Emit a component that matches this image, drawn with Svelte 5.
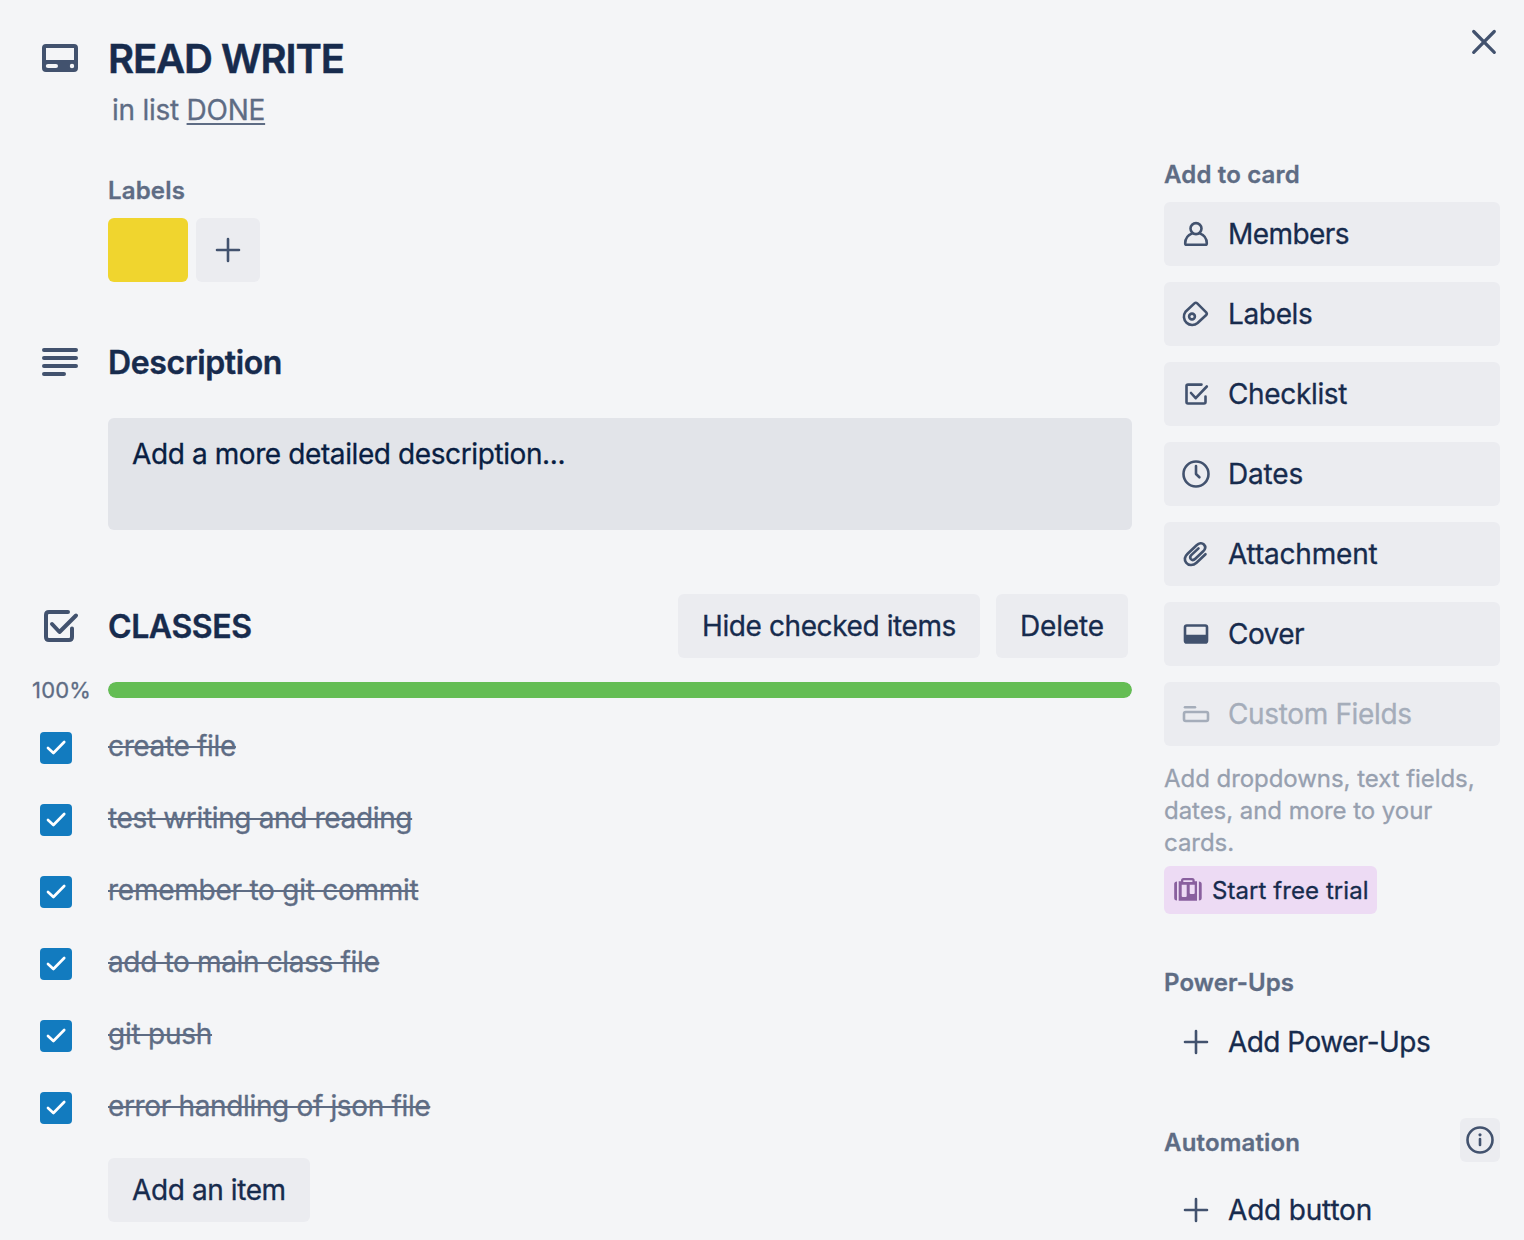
<script>
  const tasks = [
    'create file',
    'test writing and reading',
    'remember to git commit',
    'add to main class file',
    'git push',
    'error handling of json file'
  ];
  const actions = [
    { id: 'members', label: 'Members' },
    { id: 'labels', label: 'Labels' },
    { id: 'checklist', label: 'Checklist' },
    { id: 'dates', label: 'Dates' },
    { id: 'attachment', label: 'Attachment' },
    { id: 'cover', label: 'Cover' },
    { id: 'fields', label: 'Custom Fields' }
  ];
  const progress = 100;
</script>

{#snippet plus()}
  <svg class="icon" viewBox="0 0 32 32"><path d="M16 5v22M5 16h22" /></svg>
{/snippet}

{#snippet actionIcon(id)}
  <svg class="icon" viewBox="0 0 32 32">
    {#if id === 'members'}
      <circle cx="16" cy="10.6" r="5.500" />
      <path d="M12.200 15.400C8 17 5.300 20.500 5.200 25.200Q5.200 26.800 6.600 26.800H25.400Q26.800 26.800 26.800 25.200C26.700 20.500 24 17 19.800 15.400" />
    {:else if id === 'labels'}
      <path d="M14.400 5.400Q15.800 4.100 17.200 5.400L26.200 14.300Q27.400 15.700 26.200 17L17.600 25A8.300 8.300 0 0 1 5.500 13.800Z" />
      <circle cx="12" cy="18.500" r="2.900" />
    {:else if id === 'checklist'}
      <path d="M21.500 6.600H8Q6.500 6.600 6.500 8.100V24Q6.500 25.500 8 25.500H24Q25.500 25.500 25.500 24V18.500M11 15L15.700 20.200L26.800 8.500" />
    {:else if id === 'dates'}
      <circle cx="16" cy="16" r="12.500" />
      <path d="M16 8V16L19.400 19.300" />
    {:else if id === 'attachment'}
      <path d="M25.500 16.200L16.500 24.700C12.900 28 8.300 27.500 6.200 24.700C4.100 21.900 4.800 18.500 7.600 15.800L16.600 7.300C19 5 22 4.500 23.900 6.500C25.800 8.500 25.300 11.200 23.200 13.300L15.300 20.800C13.800 22.200 12 22.200 10.900 21.100C9.800 19.900 10.100 18.300 11.500 16.900L18.500 10.400" />
    {:else if id === 'cover'}
      <rect x="5" y="7.500" width="22" height="17" rx="1.800" />
      <path class="solid" d="M5 16.700H27V23Q27 25 25 25H7Q5 25 5 23Z" />
    {:else}
      <path d="M5 9.300H15" />
      <rect x="4" y="14" width="24" height="9" rx="1.700" />
    {/if}
  </svg>
{/snippet}

<div class="card">
  <button class="close" aria-label="Close">
    <svg viewBox="0 0 32 32"><path d="M5.700 5.500L26.300 26.300M26.300 5.500L5.700 26.300" /></svg>
  </button>

  <main>
    <header>
      <svg class="lead" viewBox="0 0 40 40">
        <path class="shape" fill-rule="evenodd" d="M6 6H34Q38 6 38 10V30Q38 34 34 34H6Q2 34 2 30V10Q2 6 6 6ZM6 10V22H34V10ZM8 26Q5.800 26 5.800 28T8 30H16Q18 30 18 28T16 26ZM32 25.800A2.200 2.200 0 1 0 32 30.200A2.200 2.200 0 1 0 32 25.800Z" />
      </svg>
      <div>
        <h1>READ WRITE</h1>
        <p class="list">in list <a href="#done">DONE</a></p>
      </div>
    </header>

    <section class="tags">
      <h3>Labels</h3>
      <div class="chips">
        <span class="chip"></span>
        <button class="chip-add" aria-label="Add label">{@render plus()}</button>
      </div>
    </section>

    <section class="desc">
      <div class="heading">
        <svg class="lead" viewBox="0 0 40 40"><path d="M4 8H36M4 16H36M4 24H36M4 32H24" /></svg>
        <h2>Description</h2>
      </div>
      <div class="editor">Add a more detailed description...</div>
    </section>

    <section class="checklist">
      <div class="heading">
        <svg class="lead" viewBox="0 0 40 40">
          <path d="M28 6H9Q6 6 6 9V31Q6 34 9 34H29Q32 34 32 31V22.500M12 18L19.500 26L36 9.500" />
        </svg>
        <h2>CLASSES</h2>
        <button class="btn hide">Hide checked items</button>
        <button class="btn delete">Delete</button>
      </div>
      <div class="progress">
        <span>{progress}%</span>
        <div class="track"><div class="bar" style="width: {progress}%"></div></div>
      </div>
      <ul>
        {#each tasks as task}
          <li>
            <span class="box">
              <svg viewBox="0 0 32 32"><path d="M8 16L13.400 21L24.200 10" /></svg>
            </span>
            <span class="task">{task}</span>
          </li>
        {/each}
      </ul>
      <button class="btn add">Add an item</button>
    </section>
  </main>

  <aside>
    <h3 class="s-add">Add to card</h3>
    <div class="actions">
      {#each actions as action}
        <button class="action {action.id}">
          {@render actionIcon(action.id)}
          <span>{action.label}</span>
        </button>
      {/each}
    </div>
    <p class="hint">Add dropdowns, text fields,<br />dates, and more to your<br />cards.</p>
    <button class="trial">
      <svg viewBox="0 0 32 32">
        <path class="case" fill-rule="evenodd" d="M6.700 7.300H9V6.500Q9 4 11.500 4H20.200Q22.700 4 22.700 6.500V7.300H25V26.700H6.700ZM11.300 6.300V8H20.400V6.300ZM9.700 10.700V22Q9.700 23 10.700 23H13.700Q14.700 23 14.700 22V10.700ZM17.700 10.700V19Q17.700 20 18.700 20H21.700Q22.700 20 22.700 19V10.700Z" />
        <path class="case" d="M5 7.500V26.500Q2.200 26.500 2.200 24V10Q2.200 7.500 5 7.500ZM26.900 7.500V26.500Q29.700 26.500 29.700 24V10Q29.700 7.500 26.900 7.500Z" />
      </svg>
      <span>Start free trial</span>
    </button>

    <h3 class="s-power">Power-Ups</h3>
    <button class="action plain powerups">{@render plus()}<span>Add Power-Ups</span></button>

    <div class="auto">
      <h3>Automation</h3>
      <button class="info" aria-label="About automation">
        <svg class="icon" viewBox="0 0 32 32">
          <circle cx="16" cy="16" r="12.500" />
          <path d="M16 15V21" />
          <circle class="solid" cx="16" cy="10.800" r="1.600" />
        </svg>
      </button>
    </div>
    <button class="action plain addbutton">{@render plus()}<span>Add button</span></button>
  </aside>
</div>

<style>
  :global(body) { background: #f4f5f7; overflow: hidden; }
  * { box-sizing: border-box; }
  .card {
    display: flex;
    gap: 32px;
    position: relative;
    width: 1524px;
    height: 1240px;
    padding: 0 24px 0 32px;
    overflow: hidden;
    background: #f4f5f7;
    color: #172b4d;
    font: 400 28px/40px Inter, sans-serif;
    letter-spacing: -0.35px;
    -webkit-text-stroke: 0.3px currentColor;
  }
  h1, h2, h3, p, ul { margin: 0; padding: 0; }
  ul { list-style: none; }
  button { border: 0; padding: 0; background: none; color: inherit; font: inherit; letter-spacing: inherit; white-space: nowrap; }
  svg { display: block; flex: none; fill: none; stroke: #42526e; stroke-linecap: round; stroke-linejoin: round; }
  .icon { width: 32px; height: 32px; stroke-width: 2.600; }
  .lead { width: 40px; height: 40px; margin-right: 28px; stroke-width: 4; }
  .shape, .solid { fill: #42526e; stroke: none; }
  .close { position: absolute; top: 26px; right: 24px; }
  .close svg { width: 32px; height: 32px; stroke-width: 3.200; }

  main { width: 1100px; padding-top: 35px; }
  header { display: flex; padding-left: 8px; height: 140px; }
  header .lead { margin-top: 3px; }
  h1 { font-size: 40px; font-weight: 600; line-height: 48px; letter-spacing: -1.100px; -webkit-text-stroke-width: 0.500px; }
  .list { margin: 7px 0 0 4px; color: #5e6c84; letter-spacing: -0.250px; }
  .list a { color: inherit; text-underline-offset: 3px; text-decoration-thickness: 2px; }
  h3 { color: #5e6c84; font-size: 24px; font-weight: 600; line-height: 32px; letter-spacing: 0.170px; }
  .tags { padding-left: 76px; height: 163px; }
  .chips { display: flex; gap: 8px; margin-top: 11px; }
  .chip { width: 80px; height: 64px; border-radius: 6px; background: #f0d52e; }
  .chip-add { display: grid; place-items: center; width: 64px; height: 64px; border-radius: 6px; background: #ebecf0; }
  .heading { display: flex; align-items: center; height: 64px; padding-left: 8px; }
  h2 { padding-top: 2px; font-size: 32px; font-weight: 600; line-height: 40px; letter-spacing: -0.400px; -webkit-text-stroke-width: 0.400px; }
  .desc { height: 256px; }
  .desc .heading { height: 48px; }
  .editor { height: 112px; margin: 32px 0 0 76px; padding: 16px 24px; border-radius: 6px; background: #e2e4e9; color: #091e42; letter-spacing: -0.400px; }
  .btn { height: 64px; padding: 0 24px; border-radius: 6px; background: #ebecf0; text-align: left; }
  .hide { width: 302px; margin-left: auto; letter-spacing: -0.400px; }
  .delete { width: 132px; margin: 0 4px 0 16px; letter-spacing: -0.150px; }
  .progress { display: flex; align-items: center; height: 64px; }
  .progress span { width: 76px; padding-right: 19px; text-align: right; color: #5e6c84; font-size: 22px; letter-spacing: 0.200px; }
  .track { flex: 1; height: 16px; border-radius: 8px; background: #e2e4e9; overflow: hidden; }
  .bar { height: 16px; border-radius: 8px; background: #64bd54; }
  li { display: flex; height: 72px; padding: 10px 0 0 8px; }
  .box { width: 32px; height: 32px; margin-right: 36px; border-radius: 4px; background: #127bbf; }
  .box svg { stroke: #fff; stroke-width: 2.700; }
  .task { height: 40px; margin-top: -6px; color: #5e6c84; text-decoration: line-through; text-decoration-thickness: 2px; letter-spacing: -0.350px; }
  li:nth-child(3) .task, li:nth-child(5) .task { letter-spacing: -0.250px; }
  .add { width: 202px; margin: 4px 0 0 76px; letter-spacing: -0.400px; }

  aside { width: 336px; padding-top: 159px; }
  .actions { display: grid; gap: 16px; margin-top: 11px; }
  .action { display: flex; align-items: center; gap: 16px; width: 336px; height: 64px; padding-left: 16px; border-radius: 6px; background: #ebecf0; }
  .members, .cover, .powerups { letter-spacing: -0.550px; }
  .dates, .attachment, .addbutton { letter-spacing: -0.180px; }
  .plain { background: none; }
  .fields { color: #a5adba; }
  .fields svg { stroke: #a5adba; }
  .hint { margin-top: 17px; color: #97a0af; font-size: 24px; line-height: 32px; letter-spacing: -0.050px; white-space: nowrap; }
  .trial { display: flex; align-items: center; gap: 8px; width: 213px; height: 48px; margin-top: 7px; padding-left: 8px; border-radius: 6px; background: #eddbf4; font-size: 24px; letter-spacing: 0.070px; }
  .trial svg { width: 32px; height: 32px; }
  .trial span { padding-top: 2px; }
  .case { fill: #89609e; stroke: none; }
  .s-power { margin-top: 53px; letter-spacing: 0.100px; }
  .powerups { margin-top: 11px; }
  .auto { display: flex; justify-content: space-between; align-items: center; height: 44px; margin-top: 44px; }
  .auto h3 { padding-top: 5px; }
  .info { display: grid; place-items: center; width: 40px; height: 44px; border-radius: 6px; background: #ebecf0; }
  .addbutton { margin-top: 16px; }
</style>
